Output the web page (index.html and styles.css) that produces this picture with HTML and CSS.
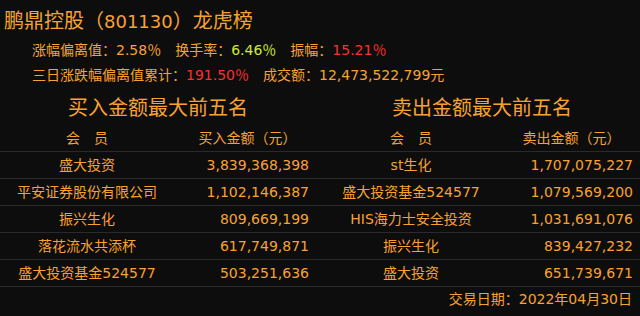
FILE: index.html
```html
<!DOCTYPE html>
<html lang="zh">
<head>
<meta charset="utf-8">
<link rel="stylesheet" href="styles.css">
</head>
<body>
<div class="page">
  <div class="title">鹏鼎控股（<span class="code">801130</span>）龙虎榜</div>
  <div class="info">
    <span class="item">涨幅偏离值：<span class="v">2.58％</span></span>
    <span class="item">换手率：<span class="v g">6.46％</span></span>
    <span class="item">振幅：<span class="v r">15.21％</span></span>
  </div>
  <div class="info">
    <span class="item">三日涨跌幅偏离值累计：<span class="v r">191.50％</span></span>
    <span class="item">成交额：<span class="v">12,473,522,799元</span></span>
  </div>
  <div class="heads">
    <div class="half">买入金额最大前五名</div>
    <div class="gap"></div>
    <div class="half">卖出金额最大前五名</div>
  </div>
  <div class="row hdr">
    <div class="mem">会　员</div><div class="amt c">买入金额（元）</div><div class="gap"></div>
    <div class="mem">会　员</div><div class="amt c">卖出金额（元）</div>
  </div>
  <div class="row">
    <div class="mem">盛大投资</div><div class="amt">3,839,368,398</div><div class="gap"></div>
    <div class="mem">st生化</div><div class="amt">1,707,075,227</div>
  </div>
  <div class="row">
    <div class="mem">平安证券股份有限公司</div><div class="amt">1,102,146,387</div><div class="gap"></div>
    <div class="mem">盛大投资基金524577</div><div class="amt">1,079,569,200</div>
  </div>
  <div class="row">
    <div class="mem">振兴生化</div><div class="amt">809,669,199</div><div class="gap"></div>
    <div class="mem">HIS海力士安全投资</div><div class="amt">1,031,691,076</div>
  </div>
  <div class="row">
    <div class="mem">落花流水共添杯</div><div class="amt">617,749,871</div><div class="gap"></div>
    <div class="mem">振兴生化</div><div class="amt">839,427,232</div>
  </div>
  <div class="row">
    <div class="mem">盛大投资基金524577</div><div class="amt">503,251,636</div><div class="gap"></div>
    <div class="mem">盛大投资</div><div class="amt">651,739,671</div>
  </div>
  <div class="date">交易日期：2022年04月30日</div>
</div>
</body>
</html>
```
FILE: styles.css
```css
html, body {
  margin: 0;
  padding: 0;
  background: #0d0d0d;
}
.page {
  width: 640px;
  height: 316px;
  overflow: hidden;
  color: #f9a231;
  font-family: "DejaVu Sans", "Noto Sans CJK SC", sans-serif;
  font-size: 14px;
}
.title {
  height: 38px;
  line-height: 40px;
  padding-left: 4px;
  font-size: 20px;
  font-family: "Noto Sans CJK SC", sans-serif;
  white-space: nowrap;
}
.code {
  font-family: "DejaVu Sans", sans-serif;
  font-size: 18px;
}
.info {
  height: 25px;
  line-height: 25px;
  padding-left: 32px;
  display: flex;
  gap: 14px;
  white-space: nowrap;
}
.g { color: #cfea3a; }
.r { color: #ff2e2e; }
.heads {
  display: flex;
  height: 37px;
  line-height: 37px;
  font-size: 20px;
  font-family: "Noto Sans CJK SC", sans-serif;
}
.half {
  width: 316px;
  text-align: center;
}
.gap {
  width: 8px;
  flex: none;
}
.row {
  display: flex;
  height: 26px;
  line-height: 26px;
  border-bottom: 1px solid #2a2a2a;
  white-space: nowrap;
}
.mem {
  width: 174px;
  flex: none;
  text-align: center;
}
.amt {
  width: 135px;
  flex: none;
  padding-right: 7px;
  text-align: right;
}
.amt.c {
  text-align: center;
  padding-left: 6px;
  padding-right: 1px;
}
.date {
  height: 29px;
  line-height: 24px;
  text-align: right;
  padding-right: 8px;
}
```
